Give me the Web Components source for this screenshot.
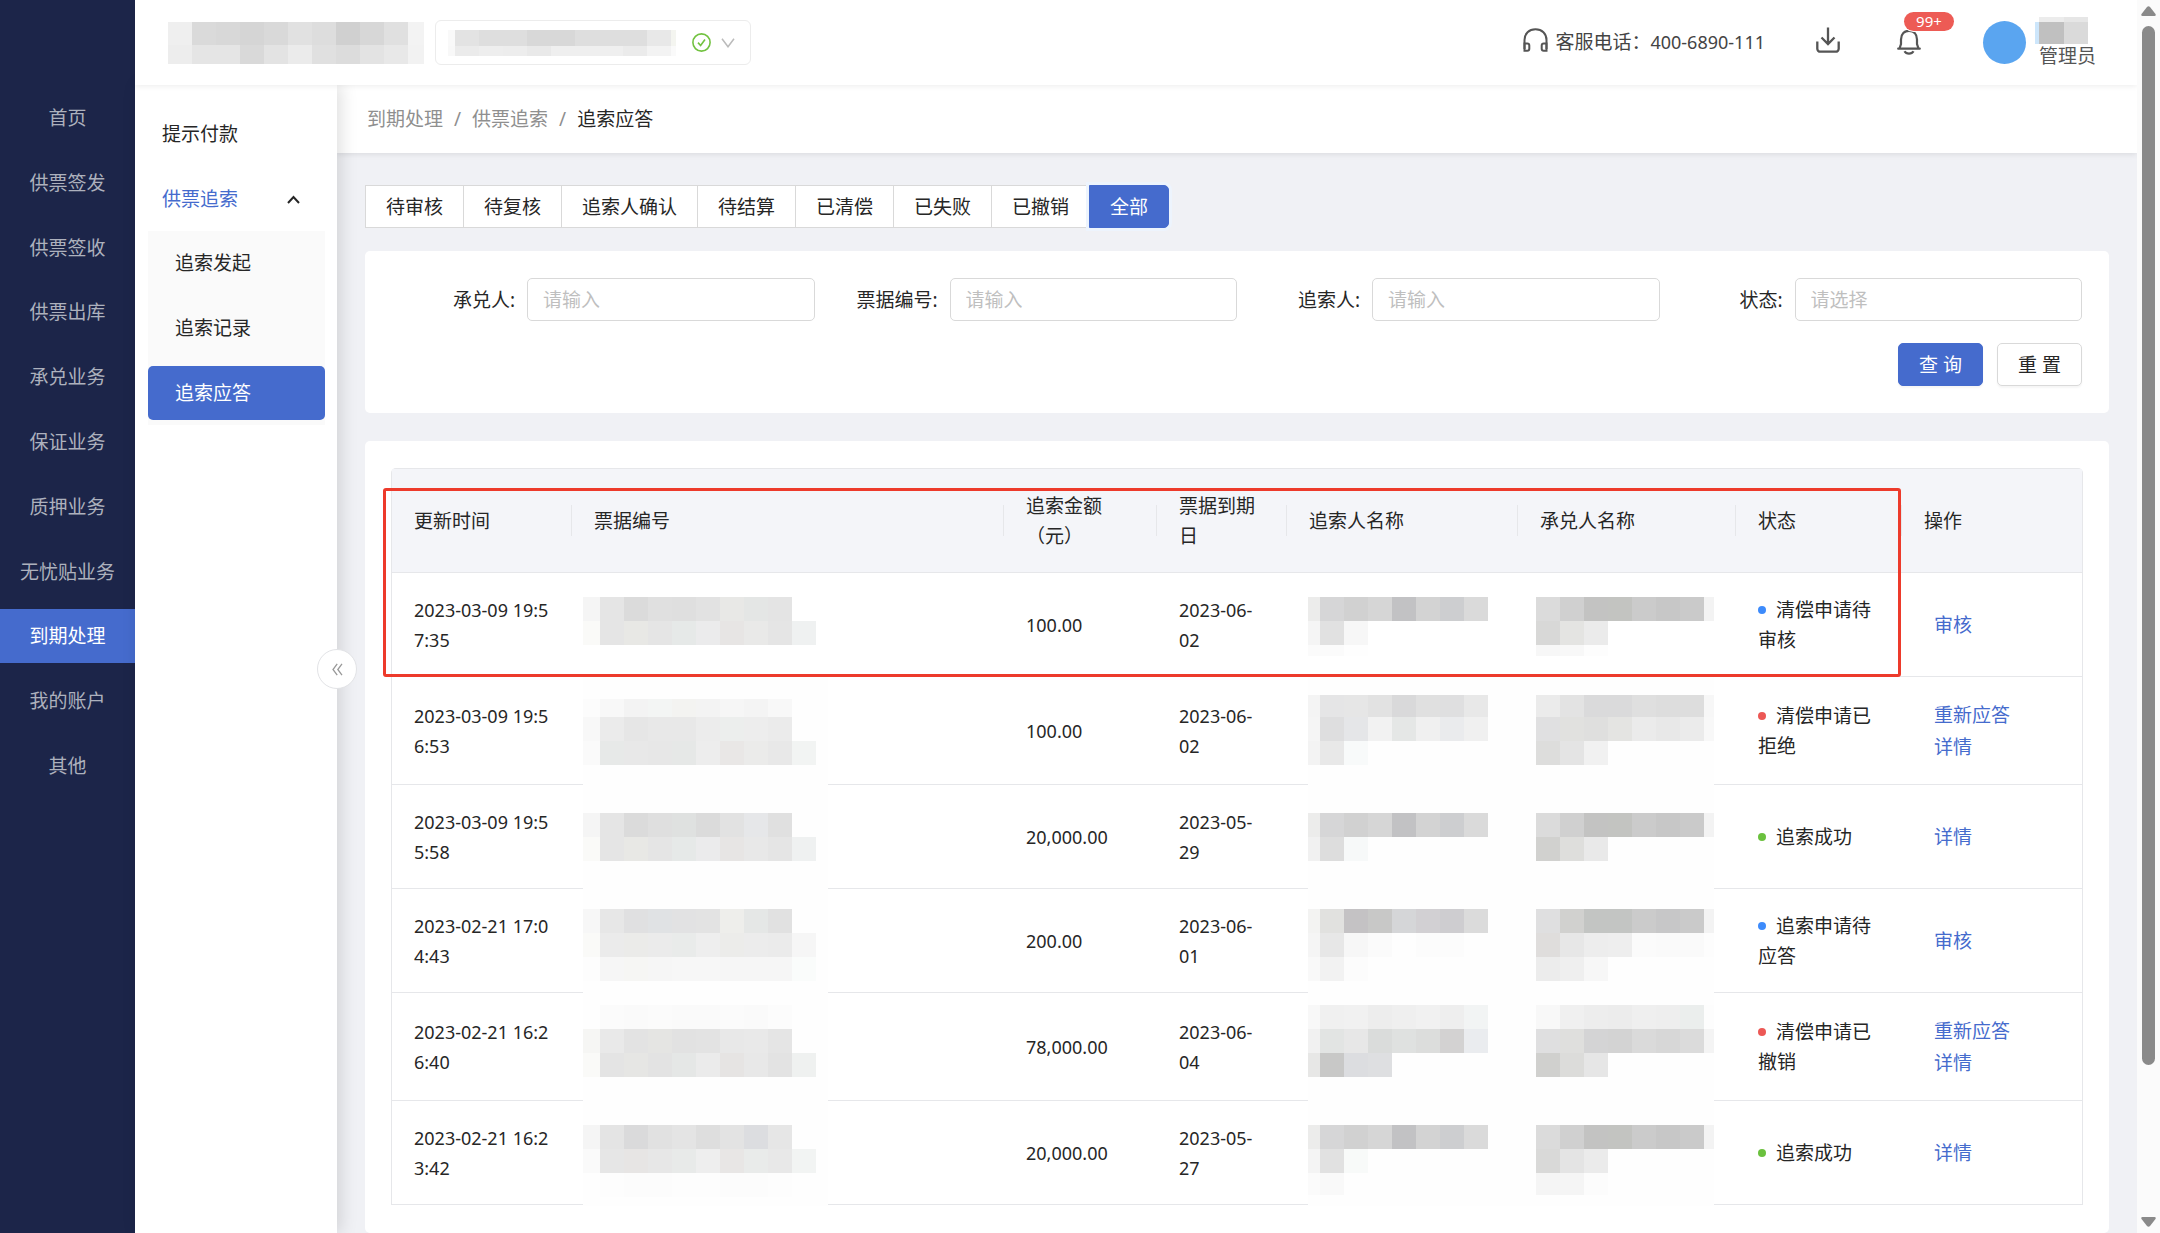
<!DOCTYPE html>
<html lang="zh-CN">
<head>
<meta charset="utf-8">
<title>追索应答</title>
<style>
  html, body {
    margin: 0;
    height: 100%;
    overflow: hidden;
  }

  body {
    --primary: #456bcd;
    --navy: #1c2549;
    --text: #262626;
    --line: #e6e7ea;
    --border: #d9d9d9;
    --page: #f0f1f5;
    font: 19px/30px "Noto Sans", "Noto Sans CJK SC", sans-serif;
    color: var(--text);
  }
</style>
</head>
<body>

<app-shell>
  <side-nav slot="nav"></side-nav>
  <top-bar slot="top"></top-bar>
  <sub-menu slot="menu"></sub-menu>
  <bread-crumb path="到期处理,供票追索,追索应答"></bread-crumb>
  <page-content>
    <status-tabs items="待审核,待复核,追索人确认,待结算,已清偿,已失败,已撤销,全部" active="全部"></status-tabs>
    <search-form>
      <form-field label="承兑人" placeholder="请输入"></form-field>
      <form-field label="票据编号" placeholder="请输入"></form-field>
      <form-field label="追索人" placeholder="请输入"></form-field>
      <form-field label="状态" placeholder="请选择" type="select"></form-field>
    </search-form>
    <record-table></record-table>
  </page-content>
  <scroll-track slot="scroll"></scroll-track>
</app-shell>

<script>
class BaseElement extends HTMLElement {
  connectedCallback() {
    if (this.shadowRoot) return;
    this.attachShadow({ mode: 'open' });
    this.shadowRoot.innerHTML = this.render();
  }
}

class AppShell extends BaseElement {
  render() {
    return `
      <style>
        :host {
          display: grid;
          grid-template-columns: 135px 202px minmax(0, 1fr) 23px;
          grid-template-rows: 85px minmax(0, 1fr);
          height: 100vh;
          background: var(--page);
        }
        ::slotted([slot="nav"]) { grid-row: 1 / 3; grid-column: 1; }
        ::slotted([slot="top"]) { grid-row: 1; grid-column: 2 / 4; z-index: 3; }
        ::slotted([slot="menu"]) { grid-row: 2; grid-column: 2; z-index: 2; }
        ::slotted([slot="scroll"]) { grid-row: 1 / 3; grid-column: 4; z-index: 4; }
        main {
          grid-row: 2;
          grid-column: 3;
          display: flex;
          flex-direction: column;
          overflow: hidden;
        }
      </style>
      <slot name="nav"></slot>
      <slot name="top"></slot>
      <slot name="menu"></slot>
      <main><slot></slot></main>
      <slot name="scroll"></slot>
    `;
  }
}

class SideNav extends BaseElement {
  render() {
    const items = ['首页', '供票签发', '供票签收', '供票出库', '承兑业务', '保证业务',
      '质押业务', '无忧贴业务', '到期处理', '我的账户', '其他'];
    return `
      <style>
        :host { display: block; background: var(--navy); }
        nav {
          display: flex;
          flex-direction: column;
          justify-content: space-between;
          height: 702px;
          padding-top: 91px;
        }
        a {
          line-height: 54px;
          text-align: center;
          text-decoration: none;
          color: #adb1bd;
        }
        a.active { background: var(--primary); color: #fff; }
      </style>
      <nav>
        ${items.map(t => `<a href="#"${t === '到期处理' ? ' class="active"' : ''}>${t}</a>`).join('')}
      </nav>
    `;
  }
}

// Pixelated block that hides private data.
// cols / rows: cell sizes, colors: one line per row, "-" leaves a cell empty
class PixelMask extends BaseElement {
  render() {
    const cols = this.getAttribute('cols').split(' ').map(Number);
    const rows = this.getAttribute('rows').split(' ').map(Number);
    const colors = this.getAttribute('colors').split('|').map(r => r.trim().split(' '));
    const width = cols.reduce((a, b) => a + b, 0);
    const height = rows.reduce((a, b) => a + b, 0);
    let rects = '';
    let y = 0;
    rows.forEach((h, r) => {
      let x = 0;
      cols.forEach((w, c) => {
        const color = colors[r][c];
        if (color && color !== '-') {
          rects += `<rect x="${x}" y="${y}" width="${w}" height="${h}" fill="#${color}"/>`;
        }
        x += w;
      });
      y += h;
    });
    return `
      <style>
        :host { display: block; }
        svg { display: block; }
      </style>
      <svg width="${width}" height="${height}" shape-rendering="crispEdges" aria-hidden="true">${rects}</svg>
    `;
  }
}

class TopBar extends BaseElement {
  render() {
    return `
      <style>
        :host {
          display: flex;
          align-items: center;
          padding: 0 41px 0 33px;
          background: #fff;
          box-shadow: 0 1px 6px rgba(0, 0, 0, .08);
        }
        button {
          font: inherit;
          color: inherit;
          background: none;
          border: 0;
          padding: 0;
          cursor: pointer;
        }
        svg { display: block; }
        .company {
          display: flex;
          align-items: center;
          width: 316px;
          height: 45px;
          margin-left: 11px;
          padding: 0 15px 0 12px;
          border: 1px solid #ececec;
          border-radius: 6px;
          box-sizing: border-box;
        }
        .company .check { margin-left: auto; }
        .company .down { margin-left: 10px; }
        .phone {
          display: flex;
          align-items: center;
          margin-left: auto;
          color: #444;
          line-height: 28px;
          padding-bottom: 2px;
        }
        .phone svg { margin-right: 7px; padding-bottom: 4px; }
        .phone b { font-weight: 400; font-size: 18px; }
        .download { margin-left: 51px; padding-bottom: 5px; }
        .bell { position: relative; margin-left: 57px; }
        .badge {
          position: absolute;
          left: 7px;
          top: -18px;
          width: 50px;
          border-radius: 10px;
          background: #ed5b55;
          box-shadow: 0 0 0 1px #fff;
          color: #fff;
          font-size: 15px;
          line-height: 19px;
          text-align: center;
        }
        .avatar {
          width: 43px;
          height: 43px;
          margin-left: 62px;
          border-radius: 50%;
          background: #5aa5f0;
        }
        .user { margin-left: 9px; color: #555; line-height: 24px; }
        .user span { display: block; padding-left: 4px; }
      </style>
      <pixel-mask cols="24 24 24 24 24 24 24 24 24 24 16" rows="23 19"
        colors="efefef dadada d8d8d8 d5d5d5 d9d9d9 e1e1e1 dddddd d0d0d0 d7d7d7 e0e0e0 f3f3f3|ededed e5e5e5 e5e5e5 d9d9d9 e3e3e3 ebebeb e0e0e0 dcdcdc e3e3e3 e8e8e8 f2f2f2"></pixel-mask>
      <button class="company" aria-label="切换企业">
        <pixel-mask cols="7 24 24 24 24 24 24 24 24 24 5" rows="16 10"
          colors="f9f9f9 e3e3e3 dedede dedede d8d8d8 d8d8d8 dedede dedede dedede e8e8e8 f4f5f0|f8f8f8 ebebeb eeeeee ededed e9e9e9 efefef efefef efefef ebebeb f3f3f3 fafafa"></pixel-mask>
        <svg class="check" width="19" height="19" viewBox="0 0 19 19" fill="none" stroke="#72c240" stroke-width="1.6">
          <circle cx="9.500" cy="9.500" r="8.600"/>
          <path d="M6 9.600l2.600 2.900L13 6.500"/>
        </svg>
        <svg class="down" width="14" height="10" viewBox="0 0 14 10" fill="none" stroke="#bbb" stroke-width="1.500">
          <path d="M1 .8l6 8 6-8"/>
        </svg>
      </button>
      <div class="phone">
        <svg width="25" height="24" viewBox="0 0 25 24" fill="none" stroke="#555" stroke-width="2">
          <path d="M1.500 21V12C1.500 5.500 6 1.300 12.500 1.300S23.500 5.500 23.500 12V21"/>
          <path d="M1.500 15.500h2.800a2 2 0 0 1 2 2v3.300a2 2 0 0 1-2 2H1.500zM23.500 15.500h-2.800a2 2 0 0 0-2 2v3.300a2 2 0 0 0 2 2h2.800z"/>
        </svg>
        <span>客服电话：</span><b>400-6890-111</b>
      </div>
      <button class="download" aria-label="下载">
        <svg width="24" height="26" viewBox="0 0 24 26" fill="none" stroke="#555" stroke-width="2.300">
          <path d="M12 .5v16M5.500 10.500L12 17l6.500-6.500"/>
          <path d="M1.300 14.500v7.200a3 3 0 0 0 3 3h15.400a3 3 0 0 0 3-3v-7.200"/>
        </svg>
      </button>
      <button class="bell" aria-label="消息">
        <svg width="24" height="26" viewBox="0 0 24 26" fill="none" stroke="#555" stroke-width="2.200">
          <path d="M1.200 18.700h21.600M2.500 18.500L4 14V9.500C4 4 7.500 .8 12 .8s8 3.200 8 8.700V14l1.500 4.500" stroke-linecap="round"/>
          <path d="M7.500 21.300c1 1.700 2.500 2.300 4.500 2.300s3.500-.6 4.500-2.300"/>
        </svg>
        <span class="badge">99+</span>
      </button>
      <div class="avatar"></div>
      <div class="user">
        <pixel-mask cols="4 25 24" rows="5 22" colors="- ececec e6e6e6|cde6fb c0c0c0 dadada"></pixel-mask>
        <span>管理员</span>
      </div>
    `;
  }
}

class SubMenu extends BaseElement {
  render() {
    return `
      <style>
        :host {
          display: block;
          position: relative;
          padding: 22px 12px 0 13px;
          background: #fff;
          box-shadow: 4px 0 16px rgba(0, 0, 0, .13);
        }
        a {
          display: flex;
          align-items: center;
          justify-content: space-between;
          height: 54px;
          padding: 0 25px 0 14px;
          color: inherit;
          text-decoration: none;
        }
        a.open { margin-top: 11px; color: var(--primary); }
        .group {
          display: flex;
          flex-direction: column;
          gap: 11px;
          margin-top: 5px;
          padding: 5px 0;
          background: #fafafa;
        }
        .group a { padding-left: 27px; }
        .group a.active {
          border-radius: 5px;
          background: var(--primary);
          color: #fff;
        }
        .collapse {
          position: absolute;
          top: 564px;
          right: -20px;
          display: grid;
          place-items: center;
          width: 40px;
          height: 40px;
          padding: 0;
          border: 1px solid #e2e3e6;
          border-radius: 50%;
          background: #fff;
        }
      </style>
      <a href="#">提示付款</a>
      <a href="#" class="open">供票追索
        <svg width="13" height="9" viewBox="0 0 13 9" fill="none" stroke="#262626" stroke-width="2"><path d="M1 8l5.500-6L12 8"/></svg>
      </a>
      <div class="group">
        <a href="#">追索发起</a>
        <a href="#">追索记录</a>
        <a href="#" class="active">追索应答</a>
      </div>
      <button class="collapse" aria-label="收起菜单">
        <svg width="11" height="13" viewBox="0 0 11 13" fill="none" stroke="#999" stroke-width="1.300"><path d="M5.200 .8L1 6.500l4.200 5.700M10 .8L5.800 6.500l4.200 5.700"/></svg>
      </button>
    `;
  }
}

class BreadCrumb extends BaseElement {
  render() {
    const parts = this.getAttribute('path').split(',');
    const last = parts.pop();
    return `
      <style>
        :host {
          display: block;
          padding: 19px 30px;
          background: #fff;
          box-shadow: 0 1px 6px rgba(0, 0, 0, .1);
        }
        nav { display: flex; gap: 11px; color: #8f8f8f; }
        a { color: inherit; text-decoration: none; }
        .current { color: var(--text); }
      </style>
      <nav>
        ${parts.map(p => `<a href="#">${p}</a><span>/</span>`).join('')}
        <span class="current">${last}</span>
      </nav>
    `;
  }
}

class PageContent extends BaseElement {
  render() {
    return `
      <style>
        :host {
          display: flex;
          flex: 1;
          flex-direction: column;
          padding: 32px 28px 0;
        }
      </style>
      <slot></slot>
    `;
  }
}

class StatusTabs extends BaseElement {
  render() {
    const active = this.getAttribute('active');
    const items = this.getAttribute('items').split(',');
    return `
      <style>
        :host { display: flex; }
        button {
          height: 43px;
          padding: 0 20px;
          border: 1px solid var(--border);
          background: #fff;
          color: inherit;
          font: inherit;
          white-space: nowrap;
        }
        button + button { margin-left: -1px; }
        button:first-child { border-radius: 5px 0 0 5px; }
        button:last-child { border-radius: 0 5px 5px 0; }
        button.active {
          border-color: var(--primary);
          background: var(--primary);
          box-shadow: 0 0 0 3px #edf4fd;
          color: #fff;
        }
      </style>
      ${items.map(t => `<button${t === active ? ' class="active"' : ''}>${t}</button>`).join('')}
    `;
  }
}

class FormField extends BaseElement {
  render() {
    const label = this.getAttribute('label');
    const placeholder = this.getAttribute('placeholder');
    const control = this.getAttribute('type') === 'select'
      ? `<select id="control"><option>${placeholder}</option></select>`
      : `<input id="control" type="text" placeholder="${placeholder}">`;
    return `
      <style>
        :host { display: flex; align-items: center; }
        label {
          flex: 0 0 135px;
          padding-right: 12px;
          box-sizing: border-box;
          text-align: right;
        }
        input, select {
          flex: 1;
          min-width: 0;
          height: 43px;
          padding: 0 15px;
          border: 1px solid var(--border);
          border-radius: 5px;
          box-sizing: border-box;
          background: #fff;
          font: inherit;
          outline: 0;
          appearance: none;
        }
        select, input::placeholder { color: #bfbfbf; }
      </style>
      <label for="control">${label}:</label>
      ${control}
    `;
  }
}

class SearchForm extends BaseElement {
  render() {
    return `
      <style>
        :host {
          display: block;
          margin-top: 23px;
          padding: 27px;
          border-radius: 5px;
          background: #fff;
        }
        .fields {
          display: grid;
          grid-template-columns: repeat(4, minmax(0, 1fr));
        }
        .actions {
          display: flex;
          justify-content: flex-end;
          gap: 14px;
          margin-top: 22px;
        }
        button {
          width: 85px;
          height: 43px;
          padding: 0;
          border: 1px solid var(--border);
          border-radius: 5px;
          background: #fff;
          box-shadow: 0 2px 2px rgba(0, 0, 0, .04);
          color: inherit;
          font: inherit;
        }
        .primary {
          border-color: var(--primary);
          background: var(--primary);
          color: #fff;
        }
      </style>
      <form>
        <div class="fields"><slot></slot></div>
        <div class="actions">
          <button type="button" class="primary">查 询</button>
          <button type="reset">重 置</button>
        </div>
      </form>
    `;
  }
}

const NO_COLS = '17 24 24 24 24 24 24 24 24 24';
const NAME_COLS = '12 24 24 24 24 24 24 24';
const DRAWER_COLS = '24 24 24 24 24 24 24 10';

// mask: [top offset, row heights, colors]
const RECORDS = [
  {
    time: '2023-03-09 19:57:35', amount: '100.00', due: '2023-06-02',
    state: '清偿申请待审核', color: '#3d8bfb', links: ['审核'],
    no: [25, '24 24', 'f5f5f5 e5e5e5 dbdbdb e0e0e0 dfdfdf e2e2e2 e8e8e6 e4e6e5 e4e4e4 -|fafaf8 e5e5e5 e8e8e5 e5e5e5 e6e9e8 ebebec e7e5e4 e9e9e8 e5e5e5 eff1f1'],
    name: [25, '24 24 11', 'ececeb d6d6d7 d1d1d1 d6d6d6 c2c2c4 d3d3d3 cdced0 dadada|f5f5f5 e1e1e1 f7f7f7|fbfbfb fbfbfb fefefe'],
    drawer: [25, '24 24 11', 'dbdbdb d0d0d0 c3c3c2 c3c4c1 cbcbcb c7c7c7 cacaca f3f3f3|d8d8d7 e4e4e2 ebebeb|f7f7f7 f8f8f8 fdfdfd']
  },
  {
    time: '2023-03-09 19:56:53', amount: '100.00', due: '2023-06-02',
    state: '清偿申请已拒绝', color: '#ec5855', links: ['重新应答', '详情'],
    no: [23, '18 24 24', 'fcfcfc f8f8f8 f3f3f3 f3f5f4 f3f3f1 f3f3f3 f6f6f6 f4f4f4 f8f8f8 -|f8f8f8 ebebeb e6e6e6 e8e8e8 e8e8e8 ececec eceeed ededed ebebeb fefefe|fafafa e7e9e8 e8e8e8 e7e7e7 e6e8e7 ededed e9e7e6 ebebea e8e8e8 f2f4f3'],
    name: [19, '22 24 24', 'f4f4f4 e5e5e6 e6e6e6 e2e2e2 d9d9da e0e0e0 dfdfe0 e8e8e8|f5f5f5 dededf e5e6e8 f2f2f2 e5e7e6 f0f0f0 eaebed f0f0f0|f3f3f3 e8e8e8 f8fafa'],
    drawer: [19, '22 24 24', 'ebebeb e3e3e3 dadadb dadadb dfdfdf dddddd dddddd f7f7f7|e0e0e1 e1e1df dfdfde e4e4e2 ebebeb e8e8e8 ebebeb f8f8f8|dddddc e4e4e4 f1f1f1']
  },
  {
    time: '2023-03-09 19:55:58', amount: '20,000.00', due: '2023-05-29',
    state: '追索成功', color: '#6bc13e', links: ['详情'],
    no: [29, '24 24', 'f5f5f5 e5e5e5 dbdbdb dfdfdf dfe1e0 dbdbdb e2e2e2 e6e7e9 e0e0e0 -|fafaf8 e5e5e5 e8e8e5 e5e5e5 e6e9e8 ebebec e7e5e4 e8e8e8 e5e5e5 eff1f1'],
    name: [29, '24 24', 'ececeb d6d6d7 d1d1d1 d6d6d6 c2c2c4 d3d3d3 cdced0 dadada|f1f1f1 dddddd f7f9f9'],
    drawer: [29, '24 24', 'dbdbdb d0d0d0 c3c3c2 c3c4c1 cbcbcb c7c7c7 cacaca f3f3f3|d1d1cf dededc e9e9e9']
  },
  {
    time: '2023-02-21 17:04:43', amount: '200.00', due: '2023-06-01',
    state: '追索申请待应答', color: '#3d8bfb', links: ['审核'],
    no: [21, '24 24 24', 'f7f7f7 e7e7e7 e0e0e1 e0e2e4 e2e2e3 e3e3e3 eeeeeb e5e7e6 e1e1e1 -|fafaf8 ebebeb ebebe9 ebebeb e9ebea eeeeee ececea ececec ebebeb f6f6f6|fdfdfd f6f6f6 f6f6f4 f6f6f6 f7f7f7 f7f7f7 f6f6f6 f6f6f6 f6f6f6 fafcfb'],
    name: [21, '24 24 24', 'f3f3f2 e1e1df c4c2c4 c8c8c7 d5d6d8 d2d0d3 cecdd0 dbdbdb|f5f5f5 e7e7e7 f7f7f7 fbfbfb fefefe fcfcfc fcfcfc fefefe|f9f9f9 f2f2f2 fcfcfc'],
    drawer: [21, '24 24 24', 'dfdfe0 d1d1cf c3c5c3 c3c5c3 cbcbcb c7c7c8 cacaca f3f3f3|dfdddc e7e7e7 ededed eeeeee fbfbfb fafafa fafafa fdfdfd|ececec efefef f7f7f7']
  },
  {
    time: '2023-02-21 16:26:40', amount: '78,000.00', due: '2023-06-04',
    state: '清偿申请已撤销', color: '#ec5855', links: ['重新应答', '详情'],
    no: [13, '24 24 24', '- fbfbfb fafafa fbfbfb fafafa fafafa fbfbfb fafafa fcfcfc -|f6f6f4 e9e9e9 e3e3e3 e5e5e3 e2e2e2 e3e3e3 e8e8e8 e9e9e9 e5e5e5 -|fafaf8 e4e4e4 e6e6e4 e3e3e3 e5e7e6 ebebeb e6e4e3 e8e8e8 e3e3e3 eff1f0'],
    name: [13, '24 24 24', 'f8f8f8 f0f0f0 f1f1f1 ededed efefef f1f1f1 eeeeee f2f4f4|f1f1f1 e2e4e3 e7e7e7 dadcdb dfe1e0 dcdddc d3d2d2 eaecef|e7e7e6 c8c8c7 dcdde0 dedfe1'],
    drawer: [13, '24 24 24', 'f8f8f8 f0f0f0 ededed ececec efefef eeeeee ebeeed fdfdfd|dfdfe0 dfdfdd d4d4d5 d3d3d3 dadada d7d7d7 dbdbdb f4f4f4|d0d0ce dcdcda e6e6e6']
  },
  {
    time: '2023-02-21 16:23:42', amount: '20,000.00', due: '2023-05-27',
    state: '追索成功', color: '#6bc13e', links: ['详情'],
    no: [25, '24 24 24', 'f5f5f5 e4e4e4 dadadb e1e1e1 e4e4e4 dedede e3e3e3 dcdde0 e6e6e6 -|fafafa e6e6e6 e7e5e4 e7e7e7 e8eae9 eeeeee e8e6e5 e9ebea e8e8e8 f2f4f3|- fdfdfd fcfcfc fcfcfc fdfdfd fdfdfd fcfcfc fcfcfc fdfdfd -'],
    name: [25, '24 24 22', 'ececeb d6d6d7 d1d1d1 d6d6d6 c2c2c4 d3d3d3 cdced0 dadada|f4f4f4 e1e1e1 f8faf9|fbfbfb f9f9f9 fefefe'],
    drawer: [25, '24 24 22', 'dbdbdb d0d0d0 c3c3c2 c3c4c1 cbcbcb c7c7c7 cacaca f3f3f3|d9d9d8 e4e4e4 ebebeb|f5f5f5 f5f5f5 fcfcfc']
  }
];

class RecordTable extends BaseElement {
  mask(kind, cols, data) {
    const [top, rows, colors] = data;
    return `<div class="mask ${kind}" style="padding-top: ${top}px"><pixel-mask cols="${cols}" rows="${rows}" colors="${colors}"></pixel-mask></div>`;
  }

  row(r) {
    return `
      <tr>
        <td class="num time">${r.time}</td>
        <td>${this.mask('no', NO_COLS, r.no)}</td>
        <td class="num">${r.amount}</td>
        <td class="num">${r.due}</td>
        <td>${this.mask('name', NAME_COLS, r.name)}</td>
        <td>${this.mask('drawer', DRAWER_COLS, r.drawer)}</td>
        <td><i class="dot" style="background: ${r.color}"></i>${r.state}</td>
        <td>${r.links.map(l => `<a href="#">${l}</a>`).join('')}</td>
      </tr>
    `;
  }

  render() {
    const heads = ['更新时间', '票据编号', '追索金额（元）', '票据到期日', '追索人名称', '承兑人名称', '状态', '操作'];
    return `
      <style>
        :host {
          display: block;
          flex: 1 0 auto;
          margin-top: 28px;
          padding: 27px 26px;
          border-radius: 5px;
          background: #fff;
        }
        .wrap {
          position: relative;
          border: 1px solid var(--line);
          border-bottom: 0;
          border-radius: 5px 5px 0 0;
        }
        table {
          width: 100%;
          table-layout: fixed;
          border-collapse: separate;
          border-spacing: 0;
        }
        th, td {
          position: relative;
          padding: 22px 22px 21px;
          border-bottom: 1px solid var(--line);
          font-weight: 400;
          text-align: left;
          vertical-align: middle;
        }
        th { background: #f4f5f9; }
        th:not(:last-child)::after {
          content: '';
          position: absolute;
          right: 0;
          top: 36px;
          width: 1px;
          height: 31px;
          background: var(--line);
        }
        .num { font-size: 18px; }
        .time { word-break: break-all; }
        .dot {
          display: inline-block;
          width: 8px;
          height: 8px;
          margin-right: 10px;
          border-radius: 50%;
          vertical-align: 3px;
        }
        a {
          display: block;
          margin-left: 10px;
          line-height: 32px;
          color: var(--primary);
          text-decoration: none;
        }
        /* masks lie over the cells and over the row lines */
        .mask {
          position: absolute;
          top: -1px;
          bottom: -2px;
          background: #fefefe;
        }
        tr:first-child .mask { bottom: 1px; background: none; }
        .no { left: 11px; width: 245px; }
        .name { left: 21px; right: 0; }
        .drawer { left: 0; right: 22px; }
        .drawer pixel-mask { padding-left: 18px; }
        .frame {
          position: absolute;
          left: -9px;
          top: 19px;
          right: 181px;
          height: 183px;
          border: 3px solid #ed3a2b;
          border-radius: 3px;
          pointer-events: none;
        }
      </style>
      <div class="wrap">
        <table>
          <colgroup>
            <col style="width: 180px"><col><col style="width: 153px"><col style="width: 130px">
            <col style="width: 231px"><col style="width: 218px"><col style="width: 166px"><col style="width: 180px">
          </colgroup>
          <thead><tr>${heads.map(h => `<th>${h}</th>`).join('')}</tr></thead>
          <tbody>${RECORDS.map(r => this.row(r)).join('')}</tbody>
        </table>
        <div class="frame"></div>
      </div>
    `;
  }
}

class ScrollTrack extends BaseElement {
  render() {
    return `
      <style>
        :host {
          display: flex;
          flex-direction: column;
          align-items: center;
          padding: 6px 0;
          background: #fbfbfb;
        }
        svg { display: block; fill: #8a8a8a; }
        .track { flex: 1; padding: 10px 0; }
        .thumb {
          width: 13px;
          height: 88%;
          border-radius: 7px;
          background: #8a8a8a;
        }
      </style>
      <svg width="15" height="10" viewBox="0 0 15 10"><path d="M6 1q1.500-1.600 3 0l5.500 7q.8 2-1 2h-12q-1.800 0-1-2z"/></svg>
      <div class="track"><div class="thumb"></div></div>
      <svg width="15" height="10" viewBox="0 0 15 10"><path d="M6 9q1.500 1.600 3 0l5.500-7q.8-2-1-2h-12q-1.800 0-1 2z"/></svg>
    `;
  }
}

customElements.define('pixel-mask', PixelMask);
customElements.define('app-shell', AppShell);
customElements.define('side-nav', SideNav);
customElements.define('top-bar', TopBar);
customElements.define('sub-menu', SubMenu);
customElements.define('bread-crumb', BreadCrumb);
customElements.define('page-content', PageContent);
customElements.define('status-tabs', StatusTabs);
customElements.define('form-field', FormField);
customElements.define('search-form', SearchForm);
customElements.define('record-table', RecordTable);
customElements.define('scroll-track', ScrollTrack);
</script>
</body>
</html>
